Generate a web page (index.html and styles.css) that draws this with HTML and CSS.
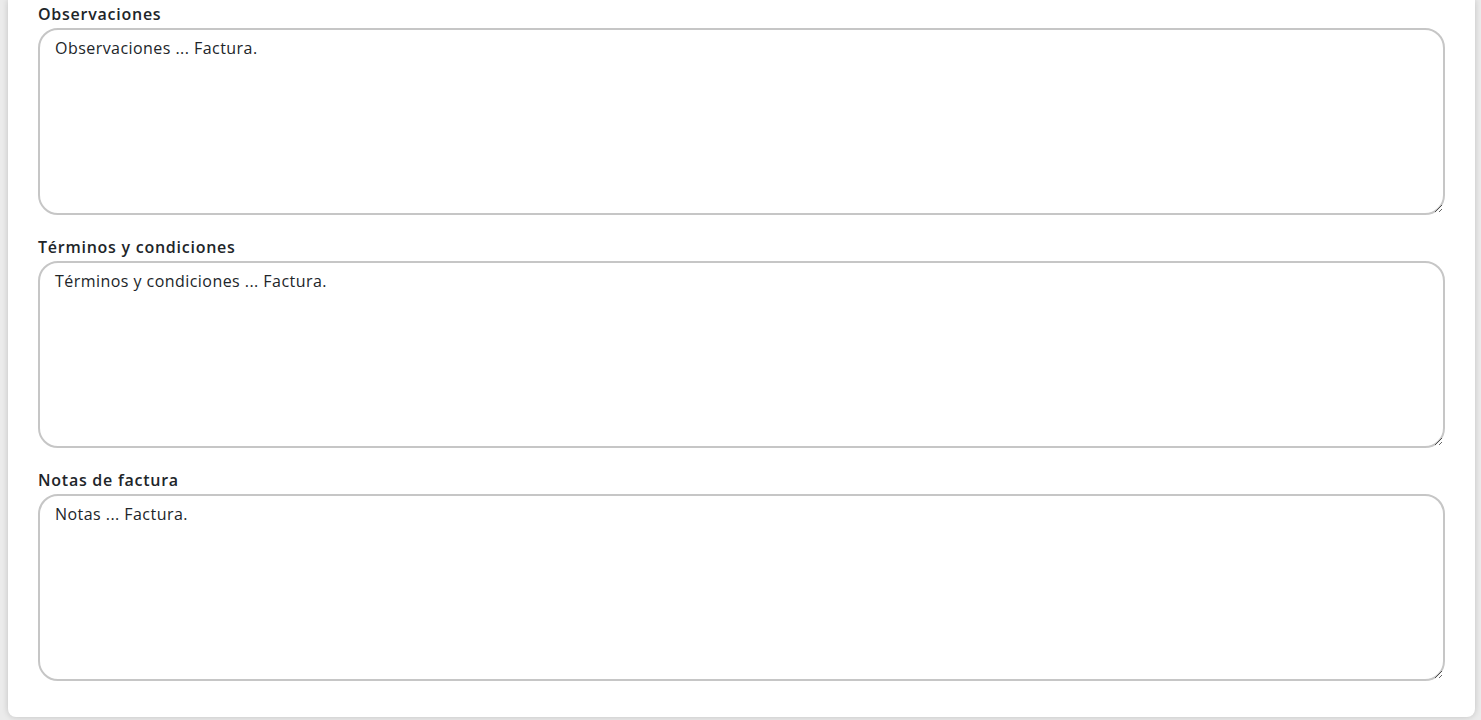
FILE: index.html
```html
<!DOCTYPE html>
<html lang="es">
<head>
<meta charset="utf-8">
<title>Factura</title>
<link rel="stylesheet" href="styles.css">
</head>
<body>
<div class="page">
  <div class="card">
    <div class="field">
      <label class="field-label" for="obs">Observaciones</label>
      <textarea id="obs" class="field-input">Observaciones ... Factura.</textarea>
    </div>
    <div class="field">
      <label class="field-label" for="ter">Términos y condiciones</label>
      <textarea id="ter" class="field-input">Términos y condiciones ... Factura.</textarea>
    </div>
    <div class="field">
      <label class="field-label" for="not">Notas de factura</label>
      <textarea id="not" class="field-input">Notas ... Factura.</textarea>
    </div>
  </div>
</div>
</body>
</html>
```
FILE: styles.css
```css
html, body {
  margin: 0;
  padding: 0;
  background: #ebebeb;
  font-family: "Open Sans", "Noto Sans", sans-serif;
  color: #212529;
}
.page {
  padding: 0 6px 3px 8px;
}
.card {
  background: #ffffff;
  border-radius: 0 0 8px 8px;
  box-shadow: 0 0 6px rgba(0, 0, 0, 0.18);
  padding: 4px 30px 13px 30px;
}
.field {
  display: flex;
  flex-direction: column;
  margin-bottom: 22px;
}
.field:last-child {
  margin-bottom: 23px;
}
.field-label {
  font-size: 16px;
  font-weight: 600;
  letter-spacing: 0.75px;
  line-height: 20px;
  margin-bottom: 4px;
  color: #212529;
}
.field-input {
  display: block;
  box-sizing: border-box;
  width: 100%;
  height: 187px;
  border: 2px solid #c6c6c6;
  border-radius: 20px;
  padding: 8px 15px;
  font-family: inherit;
  font-size: 16px;
  letter-spacing: 0.45px;
  line-height: 20px;
  color: #212529;
  background: #fff;
  outline: none;
}
```
